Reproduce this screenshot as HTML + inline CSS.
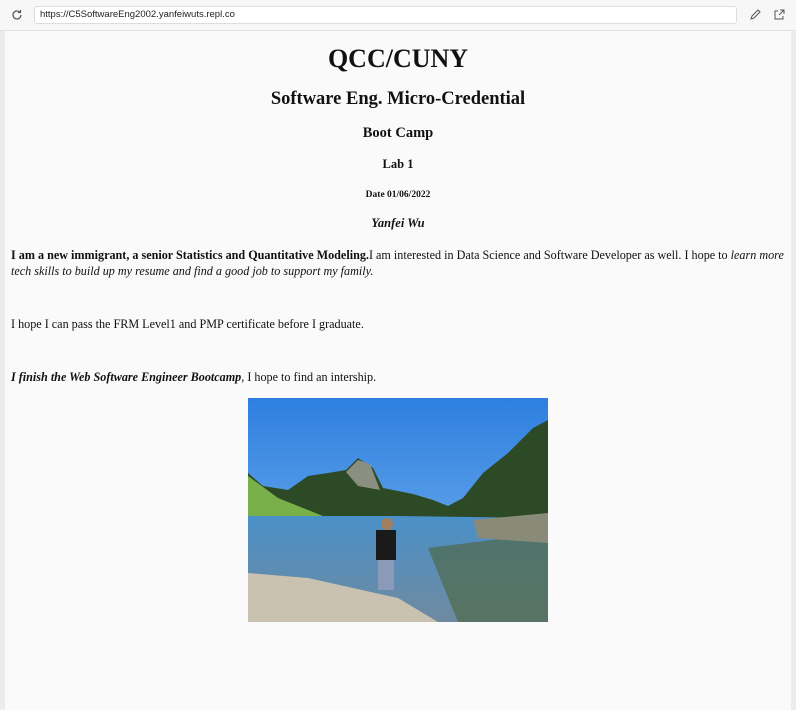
<!DOCTYPE html>
<html><head><style>
*{margin:0;padding:0;box-sizing:border-box}
body{width:796px;height:710px;background:#ececec;position:relative;overflow:hidden;font-family:"Liberation Serif",serif;color:#111}
.bar{position:absolute;left:0;top:0;width:796px;height:31px;background:#f7f7f7;border-bottom:1px solid #e2e2e2}
.url{position:absolute;left:34px;top:6px;width:703px;height:18px;border:1px solid #ddd;border-radius:3px;background:#fff;font:9.5px "Liberation Sans",sans-serif;line-height:16px;padding-left:5px;color:#222}
.page{position:absolute;left:5px;top:31px;width:786px;height:679px;background:#fafafa}
.c{position:absolute;left:0;width:796px;text-align:center;font-weight:bold}
.p{position:absolute;left:11px;width:772px;font-size:12.15px;line-height:16px;white-space:nowrap}
</style></head><body>
<div class="bar">
<svg style="position:absolute;left:11px;top:9px" width="12" height="12" viewBox="0 0 12 12"><path d="M10 6a4 4 0 1 1-1.2-2.9" fill="none" stroke="#555" stroke-width="1.2"/><path d="M9.5 1v2.5H7" fill="none" stroke="#555" stroke-width="1.2"/></svg>
<div class="url">https://C5SoftwareEng2002.yanfeiwuts.repl.co</div>
<svg style="position:absolute;left:749px;top:9px" width="12" height="12" viewBox="0 0 12 12"><path d="M2 10l1-3 6-6 2 2-6 6z" fill="none" stroke="#555" stroke-width="1"/></svg>
<svg style="position:absolute;left:773px;top:9px" width="12" height="12" viewBox="0 0 12 12"><path d="M5 2H2v8h8V7M7 1h4v4M11 1L6 6" fill="none" stroke="#555" stroke-width="1"/></svg>
</div>
<div class="page"></div>
<div class="c" style="top:44px;font-size:26px">QCC/CUNY</div>
<div class="c" style="top:89px;font-size:18.5px">Software Eng. Micro-Credential</div>
<div class="c" style="top:125px;font-size:14.5px">Boot Camp</div>
<div class="c" style="top:157px;font-size:12.5px">Lab 1</div>
<div class="c" style="top:190px;font-size:9.5px">Date 01/06/2022</div>
<div class="c" style="top:216px;font-size:12.5px;font-style:italic">Yanfei Wu</div>
<div class="p" style="top:247px"><b>I am a new immigrant, a senior Statistics and Quantitative Modeling.</b>I am interested in Data Science and Software Developer as well. I hope to <i>learn more<br>tech skills to build up my resume and find a good job to support my family.</i></div>
<div class="p" style="top:316px">I hope I can pass the FRM Level1 and PMP certificate before I graduate.</div>
<div class="p" style="top:369px"><b><i>I finish the Web Software Engineer Bootcamp</i></b>, I hope to find an intership.</div>
<svg style="position:absolute;left:248px;top:398px" width="300" height="224" viewBox="0 0 300 224">
<defs><linearGradient id="s" x1="0" y1="0" x2="0" y2="1"><stop offset="0" stop-color="#2e7fe0"/><stop offset="1" stop-color="#7db8ee"/></linearGradient>
<linearGradient id="w" x1="0" y1="0" x2="0" y2="1"><stop offset="0" stop-color="#4a90c8"/><stop offset="1" stop-color="#6f8aa0"/></linearGradient></defs>
<rect width="300" height="224" fill="url(#s)"/>
<path d="M0 75 L15 88 L40 92 L60 78 L80 75 L98 72 L110 60 L125 70 L135 90 L165 96 L185 102 L200 108 L215 100 L235 75 L260 55 L285 30 L300 22 L300 130 L0 130Z" fill="#2c4a26"/>
<path d="M98 74 L110 62 L122 66 L132 92 L110 88Z" fill="#8a8f80"/>
<path d="M0 78 L30 100 L85 122 L0 122Z" fill="#7ab04a"/>
<path d="M0 118 L150 118 L300 120 L300 224 L0 224Z" fill="url(#w)"/>
<path d="M180 150 L300 135 L300 224 L210 224Z" fill="#4e6a48" opacity=".7"/>
<path d="M225 122 L300 115 L300 145 L230 140Z" fill="#8a8a78"/>
<path d="M0 175 L60 180 L150 200 L190 224 L0 224Z" fill="#c9c2b0"/>
<rect x="128" y="132" width="20" height="30" fill="#1a1a1a"/>
<rect x="130" y="162" width="16" height="30" fill="#8a9ab8"/>
<circle cx="139" cy="126" r="6" fill="#a08060"/>
</svg>
</body></html>
